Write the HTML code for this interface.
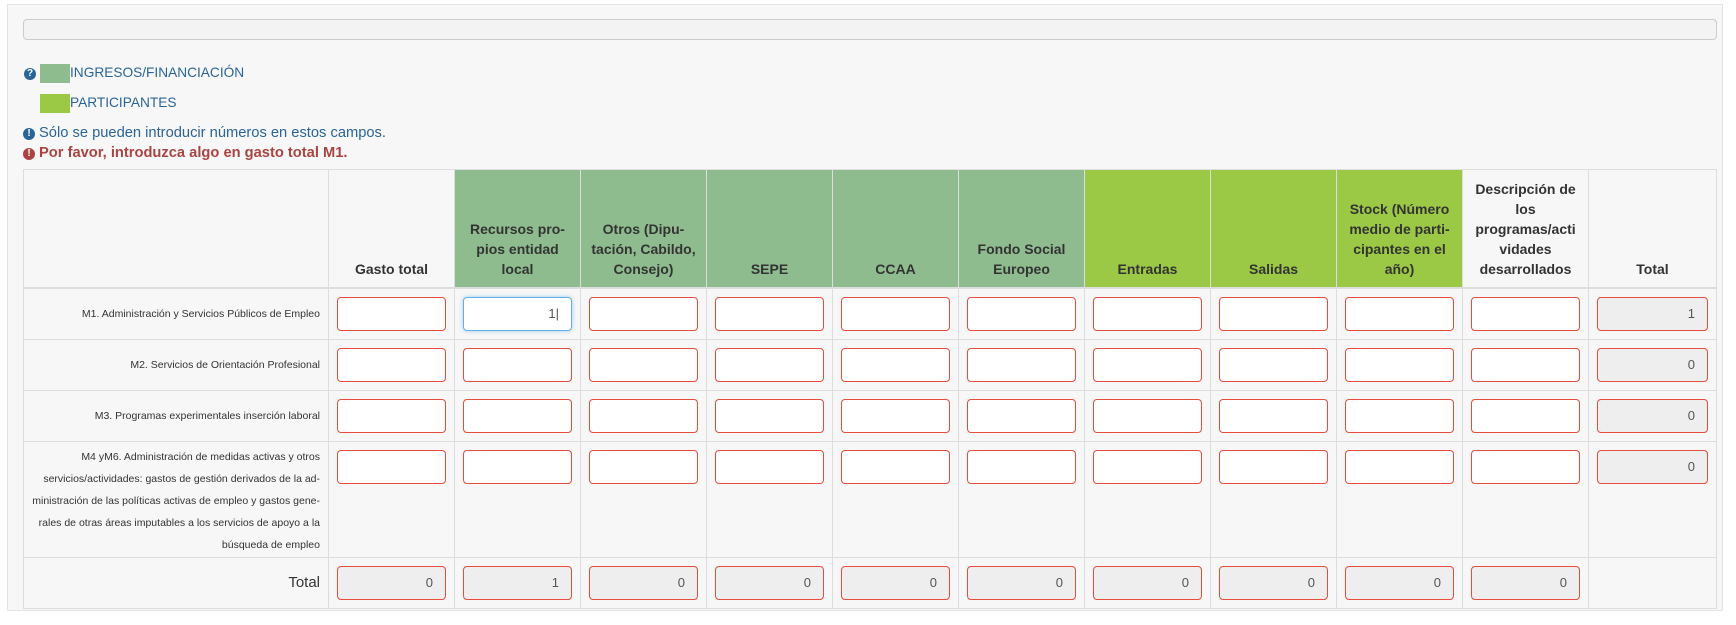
<!DOCTYPE html>
<html><head><meta charset="utf-8"><style>
*{box-sizing:border-box;margin:0;padding:0}
body{width:1736px;height:625px;background:#fff;font-family:"Liberation Sans","DejaVu Sans",sans-serif;color:#333;position:relative;overflow:hidden}
.panel{position:absolute;left:7px;top:4px;width:1716px;height:607px;background:#f7f7f7;border:1px solid #e3e3e3}
.bar{position:absolute;left:23px;top:19px;width:1694px;height:21px;background:#f3f3f3;border:1px solid #ccc;border-radius:4px}
.leg{position:absolute;left:40px;height:19px;width:30px}
.lt{position:absolute;left:70px;font-size:14px;color:#2a6496}
.ic{position:absolute;width:12px;height:12px;border-radius:50%;color:#fff;font-size:10px;font-weight:bold;text-align:center;line-height:12px}
table{position:absolute;left:23px;top:169px;border-collapse:collapse;table-layout:fixed}
td,th{border:1px solid #ddd;background:#f7f7f7}
th{font-size:14px;font-weight:bold;line-height:20px;text-align:center;vertical-align:bottom;padding:0 4px 8px;height:118px;border-bottom:2px solid #ddd;color:#333}
th.g1{background:#8fbc8f}th.g2{background:#9bc945}
td{vertical-align:top;padding:8px}
td.l{text-align:right;font-size:10.5px;vertical-align:middle;padding:0 8px 0 4px;color:#333}
.i{height:34px;border:1px solid #e74c3c;border-radius:4px;background:#fff;font-size:13px;text-align:right;padding:8px 12px 0;color:#555}
.r{background:#eee}
.f{border-color:#66afe9;box-shadow:0 0 4px rgba(102,175,233,.6)}
</style></head><body>
<div class="panel"></div>
<div class="bar"></div>
<div class="ic" style="left:24px;top:68px;background:#2a6496">?</div>
<div class="leg" style="top:64px;background:#8fbc8f"></div><div class="lt" style="top:65px;font-size:13.7px">INGRESOS/FINANCIACIÓN</div>
<div class="leg" style="top:94px;background:#9bc945"></div><div class="lt" style="top:95px;font-size:13.7px">PARTICIPANTES</div>
<div class="ic" style="left:23px;top:128px;background:#2a6496">!</div>
<div class="lt" style="left:39px;top:125px;font-size:14.7px">Sólo se pueden introducir números en estos campos.</div>
<div class="ic" style="left:23px;top:148px;background:#a94442">!</div>
<div class="lt" style="left:39px;top:145px;color:#a94442;font-weight:bold;font-size:14.7px">Por favor, introduzca algo en gasto total M1.</div>
<table>
<colgroup><col style="width:305px"><col style="width:126px"><col style="width:126px"><col style="width:126px"><col style="width:126px"><col style="width:126px"><col style="width:126px"><col style="width:126px"><col style="width:126px"><col style="width:126px"><col style="width:126px"><col style="width:128px"></colgroup>
<tr><th></th><th>Gasto total</th><th class="g1">Recursos pro-<br>pios entidad<br>local</th><th class="g1">Otros (Dipu-<br>tación, Cabildo,<br>Consejo)</th><th class="g1">SEPE</th><th class="g1">CCAA</th><th class="g1">Fondo Social<br>Europeo</th><th class="g2">Entradas</th><th class="g2">Salidas</th><th class="g2">Stock (Número<br>medio de parti-<br>cipantes en el<br>año)</th><th>Descripción de<br>los<br>programas/acti<br>vidades<br>desarrollados</th><th>Total</th></tr>
<tr style="height:51px"><td class="l">M1. Administración y Servicios Públicos de Empleo</td><td><div class="i"></div></td><td><div class="i f">1|</div></td><td><div class="i"></div></td><td><div class="i"></div></td><td><div class="i"></div></td><td><div class="i"></div></td><td><div class="i"></div></td><td><div class="i"></div></td><td><div class="i"></div></td><td><div class="i"></div></td><td><div class="i r">1</div></td></tr>
<tr style="height:51px"><td class="l">M2. Servicios de Orientación Profesional</td><td><div class="i"></div></td><td><div class="i"></div></td><td><div class="i"></div></td><td><div class="i"></div></td><td><div class="i"></div></td><td><div class="i"></div></td><td><div class="i"></div></td><td><div class="i"></div></td><td><div class="i"></div></td><td><div class="i"></div></td><td><div class="i r">0</div></td></tr>
<tr style="height:51px"><td class="l">M3. Programas experimentales inserción laboral</td><td><div class="i"></div></td><td><div class="i"></div></td><td><div class="i"></div></td><td><div class="i"></div></td><td><div class="i"></div></td><td><div class="i"></div></td><td><div class="i"></div></td><td><div class="i"></div></td><td><div class="i"></div></td><td><div class="i"></div></td><td><div class="i r">0</div></td></tr>
<tr style="height:116px"><td class="l" style="line-height:22px;vertical-align:top;padding-top:4px">M4 yM6. Administración de medidas activas y otros<br>servicios/actividades: gastos de gestión derivados de la ad-<br>ministración de las políticas activas de empleo y gastos gene-<br>rales de otras áreas imputables a los servicios de apoyo a la<br>búsqueda de empleo</td><td><div class="i"></div></td><td><div class="i"></div></td><td><div class="i"></div></td><td><div class="i"></div></td><td><div class="i"></div></td><td><div class="i"></div></td><td><div class="i"></div></td><td><div class="i"></div></td><td><div class="i"></div></td><td><div class="i"></div></td><td><div class="i r">0</div></td></tr>
<tr style="height:51px"><td class="l" style="font-size:15px">Total</td><td><div class="i r">0</div></td><td><div class="i r">1</div></td><td><div class="i r">0</div></td><td><div class="i r">0</div></td><td><div class="i r">0</div></td><td><div class="i r">0</div></td><td><div class="i r">0</div></td><td><div class="i r">0</div></td><td><div class="i r">0</div></td><td><div class="i r">0</div></td><td></td></tr>
</table>
</body></html>
